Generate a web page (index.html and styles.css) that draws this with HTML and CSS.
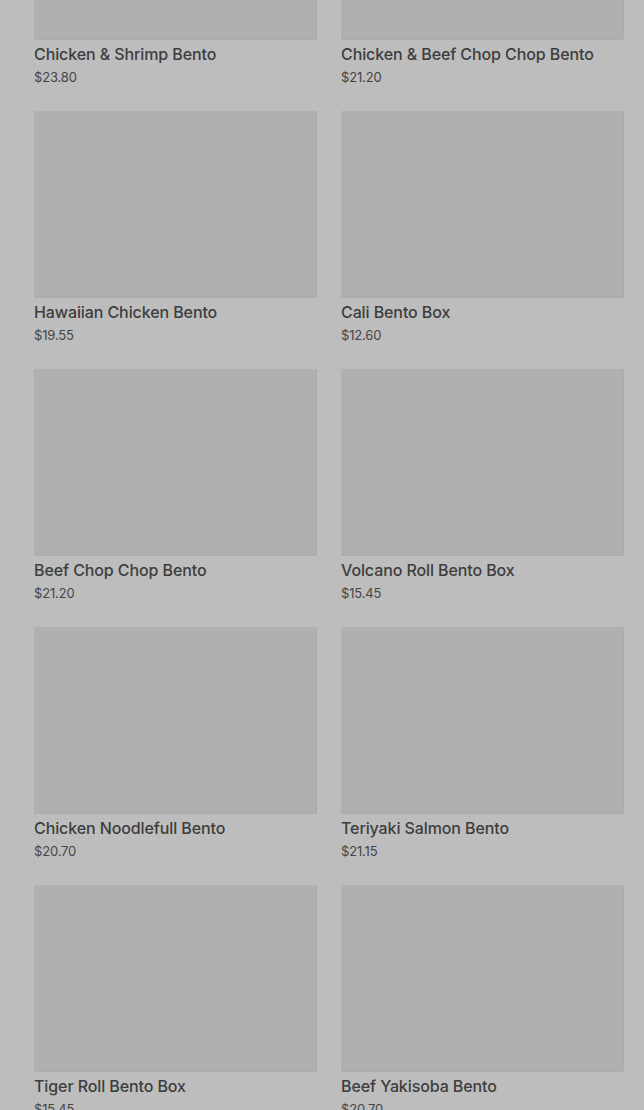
FILE: index.html
```html
<!DOCTYPE html>
<html>
<head>
<meta charset="utf-8">
<link rel="stylesheet" href="styles.css">
</head>
<body>
<main class="grid">
  <div class="card"><div class="thumb"></div><div class="name">Chicken &amp; Shrimp Bento</div><div class="price">$23.80</div></div>
  <div class="card"><div class="thumb"></div><div class="name">Chicken &amp; Beef Chop Chop Bento</div><div class="price">$21.20</div></div>
  <div class="card"><div class="thumb"></div><div class="name">Hawaiian Chicken Bento</div><div class="price">$19.55</div></div>
  <div class="card"><div class="thumb"></div><div class="name">Cali Bento Box</div><div class="price">$12.60</div></div>
  <div class="card"><div class="thumb"></div><div class="name">Beef Chop Chop Bento</div><div class="price">$21.20</div></div>
  <div class="card"><div class="thumb"></div><div class="name">Volcano Roll Bento Box</div><div class="price">$15.45</div></div>
  <div class="card"><div class="thumb"></div><div class="name">Chicken Noodlefull Bento</div><div class="price">$20.70</div></div>
  <div class="card"><div class="thumb"></div><div class="name">Teriyaki Salmon Bento</div><div class="price">$21.15</div></div>
  <div class="card"><div class="thumb"></div><div class="name">Tiger Roll Bento Box</div><div class="price">$15.45</div></div>
  <div class="card"><div class="thumb"></div><div class="name">Beef Yakisoba Bento</div><div class="price">$20.70</div></div>
</main>
</body>
</html>
```
FILE: styles.css
```css
html, body {
  margin: 0;
  padding: 0;
  background: #bdbdbd;
  overflow: hidden;
  height: 1110px;
}
body {
  font-family: Inter, "Noto Sans", sans-serif;
  color: #3b3b3b;
}
.grid {
  display: grid;
  grid-template-columns: 283px 283px;
  column-gap: 24px;
  row-gap: 25px;
  padding: 0 20px 0 34px;
  margin-top: -147px;
}
.card {
  display: flex;
  flex-direction: column;
}
.thumb {
  height: 187px;
  background: #b0b0b0;
  box-shadow: inset -2px -2px 0 rgba(0,0,0,0.015);
}
.name {
  margin-top: 4px;
  font-size: 16px;
  line-height: 20px;
  font-weight: 500;
  letter-spacing: -0.1px;
  color: #3d3d3d;
  white-space: nowrap;
}
.price {
  margin-top: 4px;
  font-size: 13px;
  line-height: 18px;
  font-weight: 400;
  letter-spacing: -0.15px;
  color: #454545;
}
```
